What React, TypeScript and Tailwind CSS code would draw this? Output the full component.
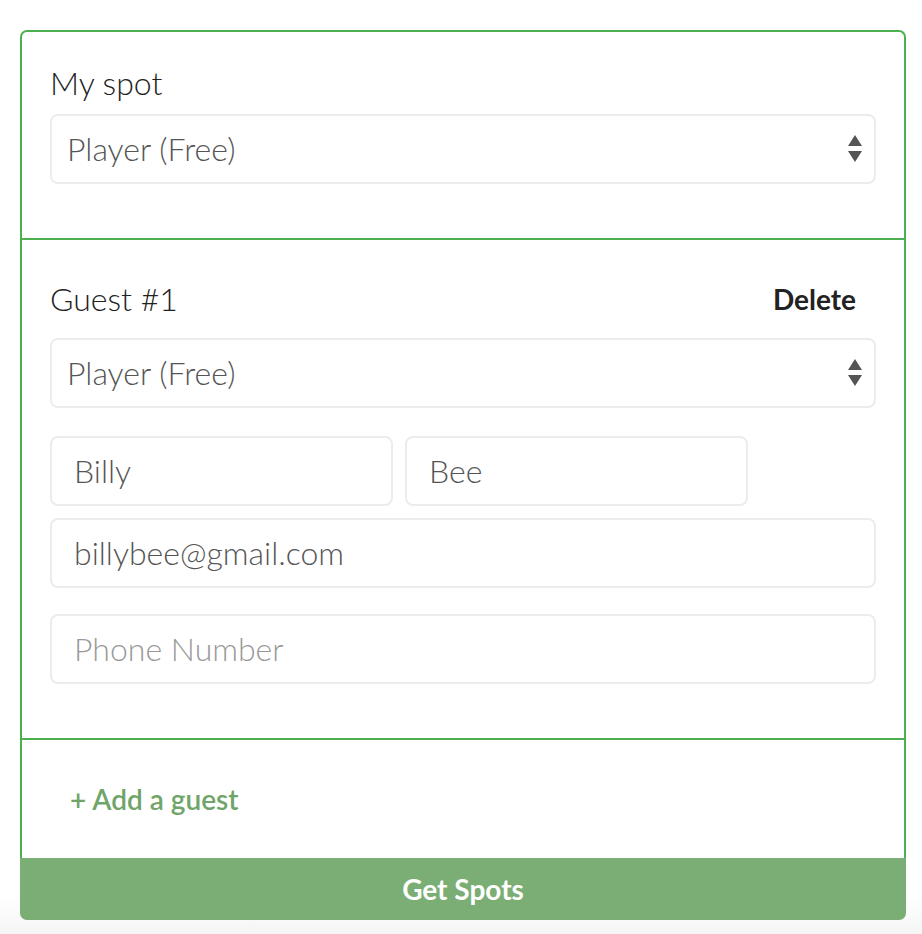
import React from "react"

const font = { fontFamily: "Lato, 'Open Sans', sans-serif" }

function SelectArrows() {
  return (
    <svg width="14" height="28" viewBox="0 0 14 28" className="shrink-0">
      <polygon points="7,0 14,11 0,11" fill="#555" />
      <polygon points="0,16 14,16 7,27" fill="#555" />
    </svg>
  )
}

function SpotSelect() {
  return (
    <div className="flex h-[70px] items-center justify-between rounded-lg border-2 border-[#ececec] bg-white pl-[15px] pr-[12px]">
      <span className="text-[32px] font-light text-[#555]">Player (Free)</span>
      <SelectArrows />
    </div>
  )
}

function Field({ value, placeholder, className }: { value?: string; placeholder?: string; className?: string }) {
  return (
    <div className={`flex h-[70px] items-center rounded-lg border-2 border-[#ececec] bg-white pl-[22px] ${className ?? ""}`}>
      {value ? (
        <span className="text-[32px] font-light text-[#555]">{value}</span>
      ) : (
        <span className="text-[32px] font-light text-[#999]">{placeholder}</span>
      )}
    </div>
  )
}

export default function App() {
  return (
    <div
      className="h-[934px] bg-[linear-gradient(to_bottom,#ffffff_895px,#f5f5f5_934px)] pt-[30px] pl-[20px]"
      style={font}
    >
      <div className="w-[886px]">
        <div className="rounded-t-[7px] border-2 border-b-0 border-[#4caf50]">
          <div className="px-[28px] pt-[32px] pb-[54px]">
            <div className="mb-[12px] h-[38px] text-[32px] font-light leading-[38px] text-[#222]">My spot</div>
            <SpotSelect />
          </div>

          <div className="border-t-2 border-[#4caf50] px-[28px] pt-[40px] pb-[54px]">
            <div className="mb-[20px] flex h-[38px] items-center justify-between">
              <span className="text-[32px] font-light leading-[38px] text-[#222]">Guest #1</span>
              <button className="mr-[20px] text-[28px] font-bold text-[#222]">Delete</button>
            </div>
            <SpotSelect />
            <div className="mt-[28px] flex gap-[12px]">
              <Field value="Billy" className="w-[343px]" />
              <Field value="Bee" className="w-[343px]" />
            </div>
            <Field value="billybee@gmail.com" className="mt-[12px]" />
            <Field placeholder="Phone Number" className="mt-[26px]" />
          </div>

          <div className="flex h-[120px] items-center border-t-2 border-[#4caf50] pl-[48px]">
            <span className="text-[28px] font-semibold text-[#6fa569]">+ Add a guest</span>
          </div>
        </div>
        <button className="flex h-[62px] w-full items-center justify-center rounded-b-[7px] bg-[#7aae74] text-[28px] font-bold text-white">
          Get Spots
        </button>
      </div>
    </div>
  )
}
